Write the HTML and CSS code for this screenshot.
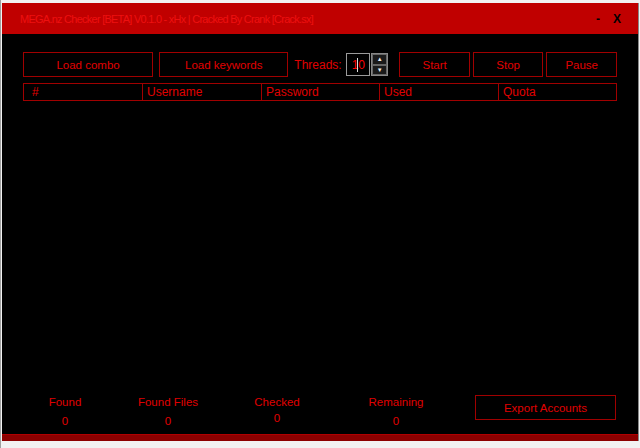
FILE: index.html
```html
<html>
<head>
	<link rel="stylesheet" href="styles.css">
</head>
<body>
	<div class="window">
		<div class="titlebar">
			<span class="title">MEGA.nz Checker [BETA] V0.1.0 - xHx | Cracked By Crank [Crack.sx]</span>
			<span class="ctl min">-</span>
			<span class="ctl close">X</span>
		</div>
		<div class="main">
			<div class="toolbar">
				<div class="btn combo">Load combo</div>
				<div class="btn keywords">Load keywords</div>
				<span class="threads-label">Threads:</span>
				<div class="spin">
					<div class="spin-value">10<span class="caret"></span></div>
					<div class="spin-arrows">
						<div class="arrow">&#9650;</div>
						<div class="arrow">&#9660;</div>
					</div>
				</div>
				<div class="btn small start">Start</div>
				<div class="btn small">Stop</div>
				<div class="btn small">Pause</div>
			</div>
			<div class="header">
				<div class="col">#</div>
				<div class="col">Username</div>
				<div class="col">Password</div>
				<div class="col">Used</div>
				<div class="col">Quota</div>
			</div>
			<div class="list"></div>
			<div class="footer">
				<div class="stat"><div>Found</div><div class="num">0</div></div>
				<div class="stat"><div>Found Files</div><div class="num">0</div></div>
				<div class="stat"><div>Checked</div><div class="num up">0</div></div>
				<div class="stat"><div>Remaining</div><div class="num">0</div></div>
				<div class="btn export">Export Accounts</div>
			</div>
		</div>
		<div class="bottom"></div>
	</div>
</body>
</html>
```

FILE: styles.css
```css
html, body {
	margin: 0;
	height: 100%;
	background: #f2f2f2;
	overflow: hidden;
}
body {
	font-family: "Liberation Sans", Arial, sans-serif;
	font-size: 11px;
	color: #e00000;
	border-left: 1px solid #a0a0a0;
}
.window {
	margin: 3px 2px 0 1px;
	width: 636px;
	border-right: 1px solid #888;
}
.titlebar {
	height: 31px;
	background: #c00000;
	display: flex;
	align-items: center;
	padding-left: 18px;
	padding-right: 17px;
}
.title {
	flex: auto;
	color: #ee1010;
	font-size: 11px;
	letter-spacing: -0.75px;
}
.ctl {
	color: #000;
	font-weight: bold;
	font-size: 12px;
}
.min {
	margin-right: 13px;
}
.main {
	height: 400px;
	background: #000;
	padding: 18px 21px 0 21px;
	box-sizing: border-box;
	display: flex;
	flex-direction: column;
}
.bottom {
	height: 7px;
	background: #8c0000;
	border-top: 1px solid #b00000;
	box-sizing: border-box;
}
.btn {
	border: 1px solid #a00000;
	display: flex;
	align-items: center;
	justify-content: center;
	box-sizing: border-box;
	height: 25px;
	color: #e00000;
	font-size: 11.5px;
}
.toolbar {
	display: flex;
	align-items: center;
	height: 25px;
}
.combo {
	width: 131px;
}
.keywords {
	width: 130px;
	margin-left: 6px;
}
.threads-label {
	margin-left: 6px;
	width: 46px;
	font-size: 12px;
}
.spin {
	display: flex;
	margin-left: 6px;
	height: 23px;
}
.spin-value {
	width: 24px;
	border: 1px solid #9a9a9a;
	box-sizing: border-box;
	display: flex;
	align-items: center;
	justify-content: center;
	color: #ff0000;
	font-size: 12px;
	position: relative;
}
.caret {
	position: absolute;
	left: 10px;
	top: 4px;
	width: 1px;
	height: 14px;
	background: #ddd;
}
.spin-arrows {
	width: 17px;
	display: flex;
	flex-direction: column;
	border: 1px solid #888;
	box-sizing: border-box;
	margin-left: 1px;
}
.arrow {
	flex: 1;
	font-size: 6px;
	color: #eee;
	display: flex;
	align-items: center;
	justify-content: center;
	border: 1px solid #666;
	background: #1a1a1a;
}
.small {
	width: 71px;
	margin-left: 3px;
}
.start {
	margin-left: 11px;
}
.header {
	display: grid;
	grid-template-columns: 118px 119px 118px 119px 1fr;
	margin-top: 6px;
	border: 1px solid #a00000;
	height: 18px;
	box-sizing: border-box;
	font-size: 12px;
}
.col {
	border-left: 1px solid #a00000;
	padding-left: 4px;
	line-height: 16px;
}
.col:first-child {
	border-left: none;
	padding-left: 8px;
}
.list {
	flex: auto;
}
.footer {
	display: grid;
	grid-template-columns: 84px 122px 96px 142px 141px;
	margin-bottom: 6px;
	align-items: start;
}
.stat {
	text-align: center;
	font-size: 11.5px;
	line-height: 14px;
}
.num {
	margin-top: 5px;
}
.num.up {
	margin-top: 2px;
}
.export {
	margin-left: 8px;
	width: 141px;
	height: 25px;
}
```
